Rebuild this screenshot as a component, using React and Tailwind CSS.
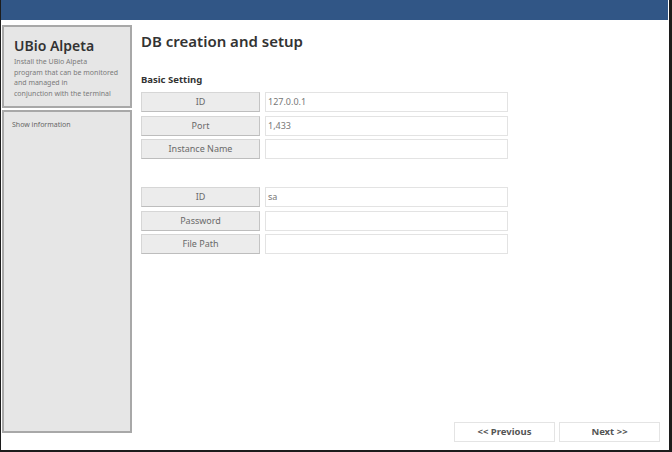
const FONT = { fontFamily: '"Noto Sans", "Open Sans", sans-serif' };

function Row({ label, value }) {
  return (
    <div className="flex h-[20px] gap-[5px]">
      <div className="flex w-[119px] items-center justify-center border border-[#d6d6d6] border-b-[#bdbdbd] border-r-[#c4c4c4] bg-[#ececec] text-[9px] text-[#6a6a6a]">
        {label}
      </div>
      <div className="flex w-[243px] items-center border border-[#e3e3e3] bg-white px-[2px] text-[9px] text-[#777]">
        {value}
      </div>
    </div>
  );
}

export default function App() {
  return (
    <div
      className="relative h-[452px] w-[672px] overflow-hidden border-b-2 border-l border-r-[3px] border-[#1c1c1c] bg-white"
      style={FONT}
    >
      <div className="mr-[1px] h-[20px] bg-[#315686]" />
      <div className="flex">
        {/* sidebar */}
        <div className="ml-[1px] mt-[5px] flex w-[130px] flex-col gap-[2px]">
          <div className="h-[83px] border-2 border-[#a8a8a8] bg-[#e6e6e6] px-[10px] pt-[10px]">
            <div className="text-[14px] font-semibold leading-[18px] text-[#333]">UBio Alpeta</div>
            <div className="mt-[2px] text-[7px] leading-[10.5px] text-[#7a7a7a]">
              Install the UBio Alpeta
              <br />
              program that can be monitored
              <br />
              and managed in
              <br />
              conjunction with the terminal
            </div>
          </div>
          <div className="h-[323px] border-2 border-[#a8a8a8] bg-[#e6e6e6] px-[8px] pt-[8px] text-[7px] text-[#666]">
            Show information
          </div>
        </div>

        {/* main */}
        <div className="ml-[9px] flex-1">
          <div className="mt-[11px] text-[15px] font-semibold leading-[20px] text-[#333]">DB creation and setup</div>
          <div className="mt-[23px] text-[9.5px] font-bold leading-[12px] text-[#333]">Basic Setting</div>
          <div className="mt-[6px] flex flex-col gap-[3.5px]">
            <Row label="ID" value="127.0.0.1" />
            <Row label="Port" value="1,433" />
            <Row label="Instance Name" value="" />
          </div>
          <div className="mt-[28px] flex flex-col gap-[3.5px]">
            <Row label="ID" value="sa" />
            <Row label="Password" value="" />
            <Row label="File Path" value="" />
          </div>
        </div>
      </div>

      <div className="absolute bottom-[8px] right-[9px] flex gap-[4px]">
        <div className="flex h-[20px] w-[101px] items-center justify-center border border-[#e4e4e4] bg-white text-[9.5px] font-bold text-[#555]">
          &lt;&lt; Previous
        </div>
        <div className="flex h-[20px] w-[101px] items-center justify-center border border-[#e4e4e4] bg-white text-[9.5px] font-bold text-[#555]">
          Next &gt;&gt;
        </div>
      </div>
    </div>
  );
}
